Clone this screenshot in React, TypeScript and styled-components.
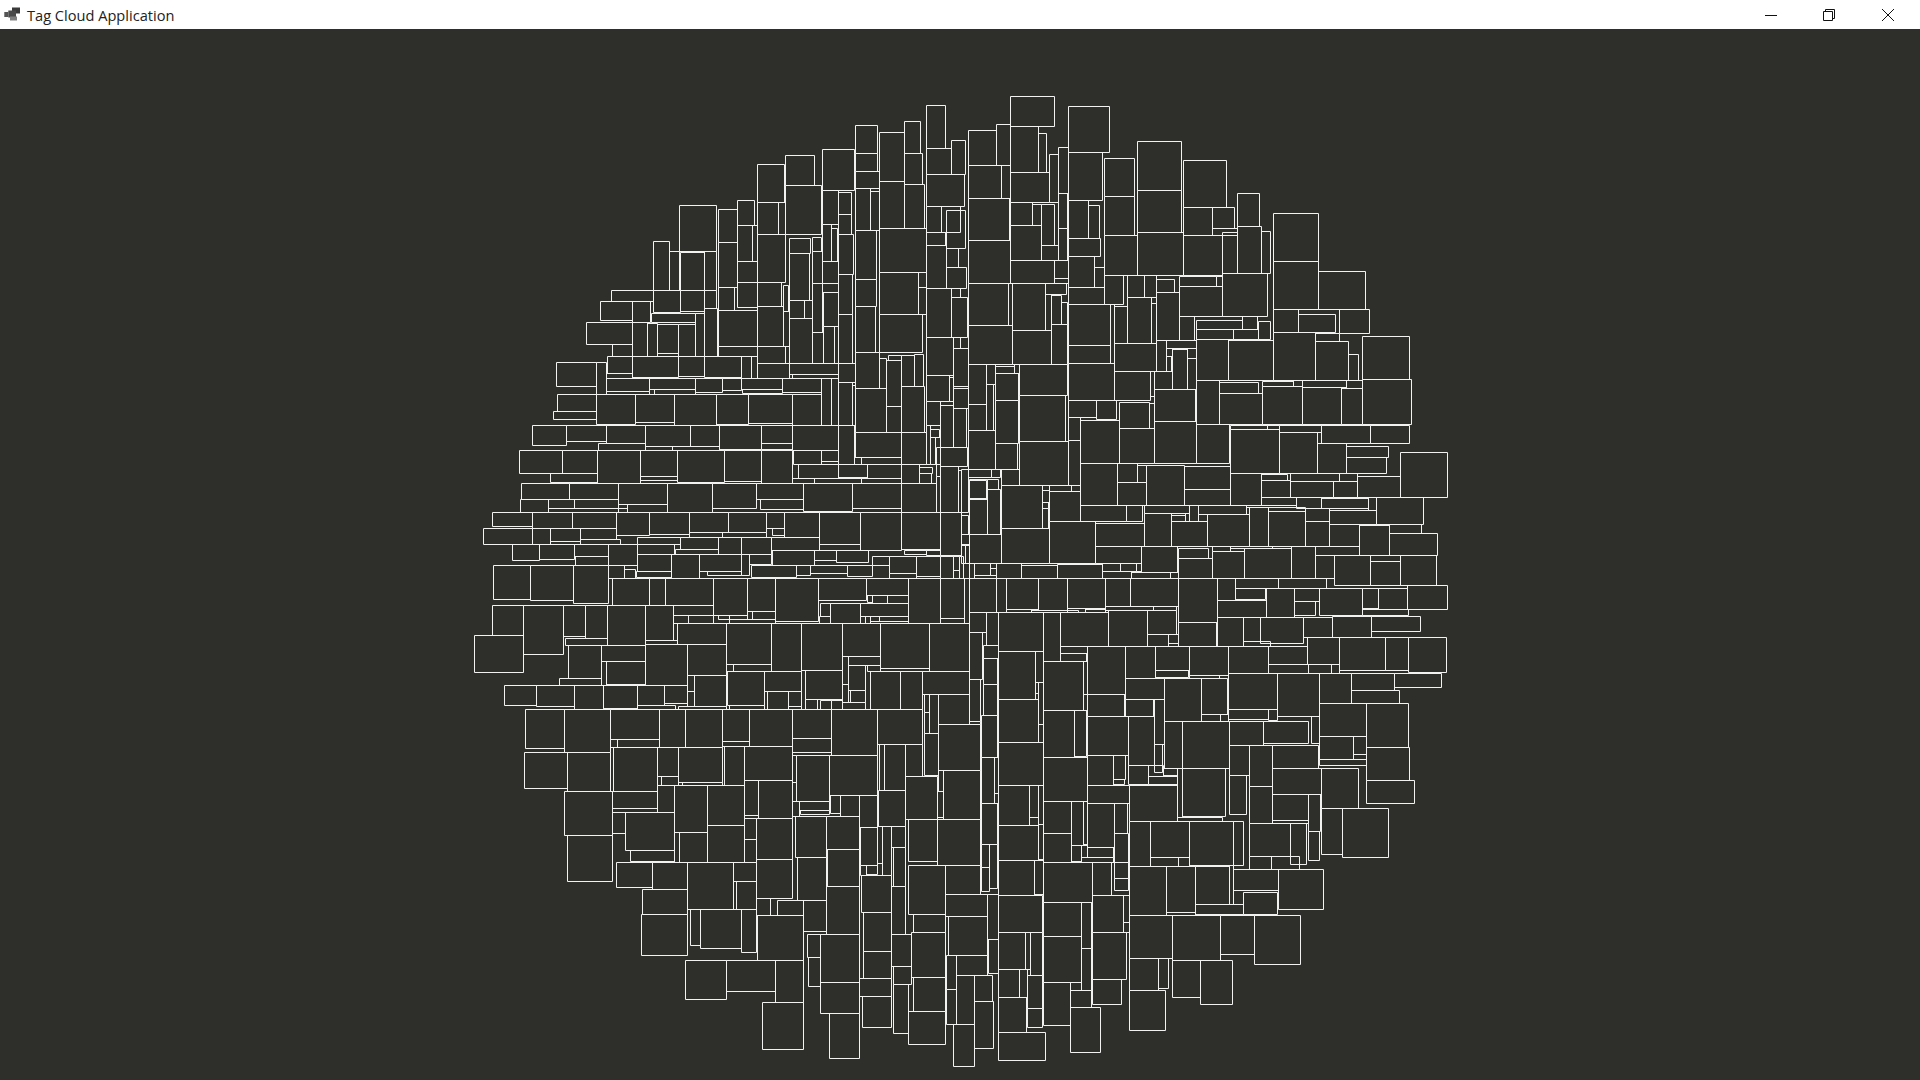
import React from "react";
import styled, { createGlobalStyle } from "styled-components";

type R = [number, number, number, number];

const TL: R[] = [[1399,76,1457,205],[1186,136,1253,220],[1333,124,1382,220],[1258,157,1333,304],[1399,205,1475,284],[1475,181,1517,284],[1186,220,1253,274],[1333,220,1388,313],[1087,208,1184,331],[976,226,1064,316],[892,253,973,367],[1186,274,1258,325],[1399,284,1514,380],[1259,304,1333,445],[1333,313,1394,445],[976,316,1085,463],[1186,325,1232,451],[1232,334,1258,451],[1135,337,1175,403],[1087,331,1135,433],[658,376,770,514],[775,388,832,487],[832,361,884,436],[892,367,955,463],[955,367,976,463],[1399,380,1445,457],[1445,380,1500,457],[1459,391,1517,505],[1135,403,1175,463],[832,436,878,544],[878,436,892,544],[1087,433,1114,544],[1114,445,1132,544],[1259,445,1399,577],[1186,451,1250,597],[892,463,976,607],[1135,463,1180,583],[1399,457,1457,496],[988,475,1052,520],[1057,472,1084,515],[775,487,832,622],[580,484,629,631],[1399,496,1459,626],[629,514,658,631],[661,517,733,631],[733,514,770,631],[1459,505,1495,562],[988,520,1049,661],[1057,515,1087,610],[1087,544,1135,610],[832,544,892,607],[1459,562,1520,625],[1135,583,1177,703],[1259,577,1375,703],[1375,577,1399,622],[1186,597,1250,679],[1087,610,1135,637],[832,607,892,682],[892,607,964,679],[971,616,985,694],[1057,610,1087,757],[775,622,823,691],[454,631,580,664],[580,631,661,697],[661,631,733,694],[733,631,770,685],[1399,626,1475,772],[1475,626,1500,652],[1375,622,1399,703],[1090,637,1135,739],[1475,652,1522,772],[421,664,517,721],[517,664,572,727],[988,661,1033,715],[1033,661,1057,715],[1186,679,1247,817],[892,679,970,799],[775,691,892,799],[574,700,706,727],[733,685,773,829],[706,700,733,829],[970,694,988,799],[1259,703,1388,817],[1135,703,1177,850],[988,715,1057,850],[379,727,517,793],[517,727,562,829],[562,730,592,829],[592,733,655,820],[655,733,706,829],[1090,739,1123,850],[1123,739,1135,850],[1057,757,1090,850],[1399,772,1480,886],[1480,772,1500,805],[1480,805,1524,920],[458,793,517,829],[775,799,892,829],[892,799,976,850],[976,799,988,850],[1186,817,1259,925],[1259,835,1280,925],[1285,826,1325,841],[1280,841,1325,979],[1325,826,1363,919],[1363,823,1391,919],[442,829,517,880],[517,829,655,892],[655,829,733,889],[733,829,844,892],[844,829,874,895],[874,829,892,895],[289,847,409,919],[409,847,439,943],[892,850,988,895],[988,850,1135,883],[1135,850,1186,907],[439,880,517,895],[997,883,1135,895],[1399,886,1468,964],[1468,892,1480,964],[439,895,568,934],[568,895,706,928],[706,895,787,937],[787,895,844,931],[844,895,967,928],[967,895,1084,937],[1084,895,1114,1036],[1114,895,1135,1036],[1135,907,1177,1036],[1177,916,1186,1036],[1186,925,1279,1057],[1325,919,1393,1057],[1480,925,1525,985],[439,934,568,943],[584,928,706,943],[847,928,967,940],[292,943,409,994],[409,943,526,1033],[526,943,643,1027],[643,943,769,1036],[769,943,865,1033],[865,943,997,1030],[997,943,1084,1036],[1279,979,1325,1057],[1399,964,1441,1036],[1441,976,1480,1102],[1480,985,1520,1102],[280,994,409,1018],[217,1036,319,1096],[319,1036,439,1084],[439,1036,556,1090],[556,1036,691,1099],[691,1036,778,1099],[778,1036,904,1108],[904,1036,997,1090],[997,1036,1135,1111],[1135,1036,1184,1153],[1186,1057,1324,1132],[1324,1057,1399,1153],[1399,1036,1411,1153],[1411,1048,1438,1072],[1411,1072,1426,1153],[1426,1072,1441,1153],[415,1090,556,1111],[904,1090,997,1108],[556,1099,637,1111],[637,1099,778,1111],[178,1111,307,1180],[307,1111,412,1180],[412,1111,541,1209],[541,1111,652,1189],[652,1111,793,1206],[793,1111,904,1204],[904,1111,997,1209],[1000,1111,1084,1153],[1084,1111,1135,1144],[1441,1102,1522,1160],[1429,1102,1441,1188],[1429,1190,1441,1297],[1184,1132,1204,1153],[1204,1132,1324,1153],[1015,1153,1135,1195],[1135,1153,1222,1192],[1222,1153,1324,1195],[1324,1153,1378,1210],[1378,1162,1417,1180],[1378,1180,1414,1210],[1441,1160,1495,1297],[1495,1170,1503,1297],[271,1180,412,1207],[541,1189,652,1200],[997,1195,1063,1210],[1063,1195,1204,1210],[1204,1195,1324,1210],[184,1210,328,1258],[328,1210,475,1258],[475,1210,622,1273],[622,1210,757,1297],[757,1210,889,1285],[889,1210,1030,1258],[1030,1210,1177,1294],[1177,1210,1324,1285],[1324,1210,1429,1297],[181,1258,265,1297],[265,1258,343,1285],[343,1258,475,1285],[901,1258,1030,1288],[475,1273,502,1297],[502,1273,622,1297],[265,1285,502,1297],[97,1297,217,1339],[217,1297,337,1345],[337,1297,469,1345],[469,1297,568,1366],[568,1297,688,1363],[688,1297,805,1357],[805,1297,919,1357],[919,1297,973,1345],[973,1297,1078,1372],[1078,1297,1201,1393],[1201,1297,1324,1411],[1324,1297,1441,1408],[1441,1297,1503,1425],[1505,1305,1525,1363],[1334,1410,1400,1422],[1400,1410,1440,1425],[70,1345,217,1393],[217,1345,271,1393],[271,1345,361,1384],[361,1345,469,1378],[937,1345,973,1366],[688,1357,787,1372],[787,1357,919,1372],[361,1378,481,1393],[532,1372,661,1393],[661,1372,775,1408],[775,1372,844,1423],[844,1372,934,1423],[934,1372,1078,1411],[1078,1393,1201,1411],[157,1393,238,1441],[238,1393,343,1438],[343,1393,445,1429],[445,1393,532,1456],[532,1393,643,1423],[646,1408,775,1423],[937,1411,1063,1456],[1063,1411,1129,1441],[1129,1411,1225,1447],[532,1423,634,1474],[634,1423,718,1495],[718,1423,844,1474],[844,1423,868,1486],[868,1423,934,1453],[346,1429,445,1456],[1238,1429,1288,1456],[1288,1429,1369,1480],[1288,1480,1369,1495],[1369,1429,1441,1489],[1441,1429,1480,1495],[1480,1430,1498,1470],[1480,1470,1498,1495],[1498,1430,1510,1495],[1510,1450,1527,1495],[100,1456,211,1558],[211,1456,340,1561],[340,1456,445,1570],[445,1456,493,1495],[1051,1456,1162,1480],[1162,1456,1238,1489],[874,1456,1009,1492],[1009,1456,1051,1486],[493,1468,526,1495],[529,1474,634,1492],[742,1474,844,1486]];

const TR: R[] = [[151,49,284,139],[325,79,449,217],[25,151,109,256],[109,133,151,256],[151,139,236,277],[236,160,260,277],[532,184,665,331],[670,241,799,382],[268,223,295,367],[295,202,325,340],[325,217,427,361],[433,235,523,349],[25,256,124,355],[124,256,151,355],[151,277,268,367],[532,331,664,457],[433,349,523,466],[832,340,898,439],[670,382,757,466],[757,382,823,445],[940,400,1075,544],[25,355,148,481],[151,367,217,436],[217,373,244,436],[244,373,283,496],[295,340,322,445],[325,361,385,475],[385,376,418,475],[757,445,832,466],[832,439,904,580],[904,454,931,580],[787,457,832,580],[433,466,532,586],[532,457,670,586],[670,466,787,586],[151,436,244,541],[295,445,322,541],[325,475,421,529],[25,481,151,610],[244,496,295,541],[151,541,283,610],[283,541,325,595],[325,529,403,622],[403,562,433,622],[940,544,1075,688],[1075,574,1216,688],[283,595,325,610],[433,586,490,673],[502,586,553,652],[553,586,589,652],[589,598,643,637],[658,589,769,619],[769,589,787,619],[787,580,922,709],[25,610,145,736],[145,610,157,736],[157,610,256,751],[256,610,319,643],[325,622,433,673],[589,637,658,781],[658,619,787,709],[256,643,274,751],[274,646,304,733],[304,667,322,733],[502,652,574,790],[574,670,589,790],[463,679,502,790],[325,673,451,796],[451,673,463,850],[940,688,1015,757],[1015,703,1126,757],[1138,688,1228,760],[658,709,703,781],[709,721,847,748],[847,709,892,748],[895,724,931,778],[709,748,820,778],[820,748,895,778],[25,736,157,853],[157,751,274,853],[274,733,322,853],[1066,760,1138,784],[1207,769,1348,898],[940,757,1066,901],[1066,784,1165,901],[1165,823,1195,901],[463,790,589,874],[589,781,619,874],[619,781,709,805],[709,778,805,901],[805,781,940,901],[325,796,451,850],[619,805,637,829],[637,808,682,928],[682,805,709,835],[682,835,709,928],[619,829,634,874],[25,853,79,973],[79,853,106,913],[106,859,163,880],[163,853,178,880],[106,880,175,961],[178,853,322,946],[325,850,463,961],[463,874,571,961],[571,874,583,949],[583,874,637,928],[709,901,778,1033],[778,907,895,940],[907,904,1000,919],[1000,901,1027,919],[1027,901,1159,922],[1159,901,1207,925],[1207,898,1354,1033],[583,928,706,1024],[778,940,907,1033],[907,919,1027,1033],[1027,922,1144,1033],[1144,925,1207,1033],[79,913,100,1051],[25,973,79,1051],[106,961,175,1090],[178,946,316,1084],[325,961,409,1012],[409,961,469,1018],[478,967,568,1045],[568,970,583,1045],[361,1021,478,1150],[325,1012,361,1081],[583,1024,709,1150],[709,1033,808,1150],[812,1036,922,1048],[922,1036,958,1048],[958,1036,1084,1057],[1084,1036,1231,1090],[1231,1036,1348,1090],[812,1048,958,1180],[958,1057,1072,1180],[1072,1057,1084,1090],[478,1045,583,1150],[25,1051,106,1168],[106,1090,172,1168],[178,1084,325,1216],[325,1081,361,1216],[1072,1090,1159,1180],[1159,1099,1285,1132],[1159,1132,1279,1180],[1321,1117,1462,1252],[361,1150,472,1276],[472,1150,532,1207],[532,1156,559,1207],[559,1156,673,1276],[673,1159,811,1228],[811,1180,904,1276],[904,1183,982,1201],[991,1180,1138,1204],[1138,1180,1192,1204],[1192,1189,1321,1252],[4,1168,25,1297],[25,1168,94,1192],[94,1168,121,1192],[28,1201,79,1255],[27,1199,81,1257],[82,1198,115,1228],[28,1255,82,1363],[82,1228,121,1363],[124,1168,178,1216],[124,1216,247,1345],[247,1216,268,1231],[268,1216,334,1234],[334,1216,361,1234],[904,1201,991,1252],[991,1204,1120,1252],[1120,1204,1192,1252],[472,1207,559,1276],[268,1234,361,1324],[247,1231,268,1267],[247,1267,265,1285],[247,1285,265,1345],[673,1228,811,1276],[904,1252,1009,1276],[1009,1252,1084,1285],[1084,1255,1225,1285],[1225,1252,1249,1291],[1249,1252,1390,1333],[361,1276,499,1324],[499,1276,547,1324],[553,1276,688,1300],[688,1276,715,1324],[715,1276,859,1303],[859,1276,1009,1282],[868,1282,925,1399],[925,1294,1036,1399],[925,1282,1036,1294],[1036,1285,1108,1324],[1108,1291,1249,1333],[553,1300,634,1399],[634,1306,676,1324],[676,1300,688,1324],[634,1324,742,1399],[715,1303,742,1324],[742,1303,868,1399],[1036,1324,1108,1399],[1108,1333,1198,1399],[1198,1336,1288,1426],[1288,1333,1384,1360],[1288,1360,1432,1426],[268,1324,406,1450],[406,1330,553,1399],[124,1345,268,1450],[28,1363,124,1450],[4,1363,28,1393],[406,1399,544,1450],[544,1399,652,1477],[655,1405,745,1435],[757,1399,811,1414],[811,1399,937,1405],[757,1414,853,1495],[853,1405,994,1495],[994,1399,1066,1495],[1066,1399,1198,1426],[1066,1426,1123,1495],[1123,1426,1231,1515],[1231,1426,1321,1444],[1231,1444,1321,1515],[1321,1426,1429,1515],[655,1435,757,1495],[43,1450,91,1486],[109,1450,184,1495],[184,1456,292,1495],[292,1453,427,1495],[427,1450,481,1474],[481,1450,529,1474],[529,1450,544,1474],[427,1474,514,1495],[514,1477,631,1495],[631,1477,655,1495],[91,1450,109,1465],[91,1465,109,1486],[28,1450,43,1495],[4,1395,16,1450],[17,1395,28,1450]];

const BL: R[] = [[457,25,568,105],[568,25,616,105],[616,25,760,105],[760,25,862,135],[862,25,946,123],[946,25,1075,154],[1075,25,1219,90],[1219,25,1345,75],[1345,25,1441,159],[1441,25,1513,145],[1513,25,1528,160],[1222,75,1237,96],[1237,75,1282,99],[1282,75,1345,99],[1081,101,1111,138],[1111,99,1201,159],[1201,99,1345,138],[1078,140,1111,159],[97,106,190,196],[190,106,310,253],[310,106,376,199],[376,106,442,205],[442,106,556,226],[556,106,640,211],[640,106,760,136],[640,136,685,159],[685,136,760,159],[760,135,808,159],[775,135,862,148],[862,123,877,148],[877,123,946,148],[808,148,946,159],[1201,140,1216,159],[1216,140,1231,159],[1231,154,1345,159],[1258,140,1345,154],[316,205,442,226],[556,211,652,223],[43,196,190,307],[652,160,799,223],[799,160,934,283],[934,160,1024,303],[1024,160,1147,300],[1147,160,1261,259],[1261,160,1408,295],[1408,160,1528,303],[325,226,424,325],[424,226,556,274],[556,223,682,346],[682,223,799,316],[424,274,439,346],[439,274,556,343],[1147,259,1165,343],[1165,259,1261,286],[1165,286,1216,361],[1222,286,1261,304],[799,283,820,304],[820,283,934,304],[1231,304,1321,418],[1321,304,1387,418],[1387,304,1528,373],[802,304,913,406],[913,304,1024,364],[1036,301,1147,388],[298,325,424,346],[682,316,703,364],[703,316,799,409],[133,346,229,406],[229,346,343,409],[343,346,430,418],[430,346,532,415],[532,346,613,406],[613,346,682,400],[682,364,703,409],[922,364,985,418],[985,364,1024,409],[1147,343,1165,397],[1171,361,1216,397],[1036,388,1072,418],[1081,391,1114,418],[1114,391,1147,418],[532,406,646,418],[655,409,799,418],[808,406,913,418],[985,409,1024,418],[1147,397,1216,418],[1393,373,1408,427],[1408,373,1435,490],[1435,373,1528,463],[196,418,313,535],[313,418,451,547],[451,418,598,508],[598,418,676,532],[676,418,787,532],[787,418,868,514],[868,418,997,529],[997,418,1114,505],[1114,418,1252,556],[1252,418,1387,523],[1393,427,1408,490],[1435,463,1561,601],[1393,490,1435,616],[451,508,472,532],[472,508,598,532],[997,505,1114,547],[787,514,868,529],[193,547,322,655],[322,547,451,664],[460,532,592,664],[592,532,655,619],[655,532,787,637],[793,529,853,646],[853,529,997,631],[997,556,1009,637],[1009,556,1108,694],[1108,556,1252,676],[1258,523,1273,661],[1273,523,1336,661],[1336,523,1387,619],[592,619,604,646],[604,619,655,646],[667,637,787,646],[1336,619,1432,748],[1435,601,1450,664],[1450,601,1561,748],[853,631,895,736],[895,631,997,745],[592,646,643,727],[643,646,742,787],[742,646,853,766],[997,637,1009,694],[1255,661,1336,769],[313,664,457,796],[457,664,592,715],[1111,676,1141,730],[1141,676,1198,739],[1198,676,1252,772],[1432,664,1450,742],[1018,694,1108,721],[997,694,1018,739],[1020,721,1108,733],[457,715,592,727],[457,727,496,790],[496,727,643,841],[853,745,889,808],[889,745,997,868],[1006,739,1099,862],[1099,739,1198,838],[1345,748,1432,874],[1432,748,1561,886],[742,766,853,877],[1201,772,1252,886],[1252,769,1267,880],[1267,769,1294,916],[1294,769,1336,832],[643,787,658,877],[658,787,742,877],[322,796,457,934],[853,808,889,877],[1300,832,1336,949],[511,841,643,874],[1102,838,1198,949],[889,868,997,985],[1012,862,1099,991],[469,877,577,952],[577,877,682,958],[682,877,820,1018],[820,877,889,934],[1345,886,1456,1033],[1456,886,1561,973],[1201,886,1219,916],[1219,886,1252,913],[1204,916,1294,1027],[829,934,889,1018],[547,958,682,1033],[1294,949,1336,1093],[1099,949,1198,1093],[1456,973,1582,1039],[889,985,931,1036],[952,991,1030,1036],[1030,991,1099,1084],[691,1018,721,1126],[721,1018,844,1135],[844,1018,889,1147],[1210,1027,1294,1144],[544,1033,682,1156],[892,1036,1030,1171],[1360,1033,1456,1087],[1465,1039,1582,1156],[1042,1093,1081,1162],[1081,1093,1198,1237],[1294,1093,1354,1189],[1354,1087,1456,1222],[1210,1144,1294,1225],[676,1171,799,1288],[799,1171,946,1264],[946,1171,1030,1297],[1045,1162,1081,1249],[1459,1156,1489,1258],[1489,1156,1582,1216],[1300,1189,1354,1243],[1360,1222,1456,1324],[1198,1225,1294,1279],[1081,1237,1198,1330],[1300,1243,1345,1390],[1207,1279,1294,1372],[907,1297,1030,1438],[1108,1330,1198,1465],[1345,1324,1456,1423],[1459,1258,1489,1363],[1489,1216,1543,1363],[1480,1363,1543,1489]];

const BR: R[] = [[28,25,109,126],[109,25,139,126],[139,25,235,117],[235,25,322,120],[322,25,436,114],[436,25,511,108],[511,25,655,108],[655,25,772,156],[772,25,826,90],[826,25,955,54],[955,25,1099,54],[826,54,916,87],[919,54,1003,141],[1003,54,1078,93],[1078,54,1207,135],[1207,54,1255,114],[1255,54,1342,117],[1342,45,1462,118],[1003,93,1066,135],[772,90,919,141],[436,108,580,120],[580,108,648,120],[139,117,214,126],[214,120,355,126],[322,114,376,126],[376,117,436,126],[1207,117,1345,135],[28,126,79,186],[79,126,115,225],[115,126,250,243],[250,126,301,274],[301,126,445,229],[445,120,562,229],[562,120,649,192],[655,156,769,229],[772,141,850,229],[850,141,901,214],[901,141,1030,220],[1030,141,1117,202],[1117,138,1234,202],[1234,138,1381,184],[562,192,625,229],[625,192,655,220],[625,220,655,229],[850,214,931,229],[28,186,67,328],[1042,202,1138,283],[1138,202,1276,301],[1276,202,1345,301],[1345,202,1459,307],[71,226,115,265],[301,229,382,250],[301,250,379,274],[382,229,496,373],[496,229,586,325],[586,229,688,301],[688,229,805,316],[805,229,925,310],[925,229,1042,283],[115,243,226,388],[226,243,250,337],[71,265,112,343],[250,274,370,421],[370,274,382,373],[925,283,1045,310],[1045,283,1114,310],[586,301,685,322],[1114,283,1138,310],[805,310,952,418],[952,310,1078,439],[1078,310,1174,400],[1174,310,1303,361],[1303,310,1444,352],[688,316,778,325],[496,325,613,388],[613,325,724,454],[724,325,802,433],[28,328,61,454],[71,343,112,436],[1174,361,1318,400],[382,373,493,439],[370,373,382,421],[115,388,235,517],[226,337,235,370],[235,337,250,463],[496,388,580,439],[583,388,613,523],[1078,400,1219,499],[1219,400,1345,532],[805,418,925,448],[925,418,952,451],[250,421,343,562],[343,421,379,559],[382,439,505,556],[505,439,583,586],[724,433,781,454],[781,433,805,454],[65,436,112,562],[28,454,61,463],[1054,439,1078,520],[613,454,667,595],[667,454,808,595],[808,454,910,526],[910,454,1045,520],[235,463,250,517],[1078,499,1180,568],[1180,499,1219,553],[115,517,250,646],[808,526,868,616],[868,526,937,649],[937,526,1075,595],[1219,532,1348,631],[583,523,607,607],[1180,553,1219,568],[250,562,382,694],[382,556,460,646],[460,556,496,628],[65,562,103,700],[103,562,115,670],[1078,568,1219,586],[505,586,565,643],[565,586,610,619],[610,595,652,616],[565,619,652,643],[667,595,796,739],[1084,595,1195,715],[937,595,1084,673],[808,616,859,733],[1219,631,1363,700],[460,628,493,643],[115,646,208,766],[208,646,235,742],[235,646,250,763],[382,646,508,700],[508,646,652,754],[652,595,667,742],[868,649,937,760],[937,673,1045,751],[1045,673,1081,784],[250,694,334,790],[334,694,370,826],[370,694,382,823],[382,700,463,832],[463,700,502,790],[65,700,112,823],[103,670,115,700],[1084,715,1147,853],[1147,715,1285,862],[652,742,787,754],[208,742,235,766],[508,754,571,889],[571,754,688,862],[688,754,820,886],[820,754,850,886],[868,760,991,859],[991,760,1039,883],[937,751,1045,760],[115,766,235,871],[235,763,250,868],[250,790,334,877],[463,790,505,925],[1045,784,1078,871],[65,823,88,892],[88,823,112,955],[334,826,364,874],[364,826,382,862],[382,832,460,862],[364,862,460,877],[571,862,655,889],[655,862,688,889],[868,859,934,898],[934,859,1018,898],[115,871,223,976],[223,871,250,973],[250,877,397,997],[397,877,454,976],[454,877,508,976],[65,892,88,964],[508,889,619,1036],[619,889,706,1027],[706,889,808,1003],[808,886,820,1003],[820,898,955,961],[955,898,1090,1018],[463,925,505,961],[850,967,952,1033],[706,1003,850,1033],[115,976,247,1087],[397,976,490,1087],[490,976,508,1057],[82,973,115,1108],[250,997,364,1099],[364,997,394,1135],[619,1027,706,1036],[508,1036,637,1165],[637,1036,781,1171],[781,1036,883,1153],[883,1036,1022,1183],[115,1087,196,1198],[196,1087,211,1198],[211,1087,247,1216],[397,1087,499,1228],[490,1057,508,1087],[85,1108,115,1210],[250,1099,364,1237],[364,1135,394,1261],[508,1165,595,1261],[595,1165,625,1255],[637,1171,721,1282],[721,1171,817,1303],[115,1198,178,1282],[178,1198,202,1282],[202,1216,247,1315],[43,1216,97,1294],[397,1228,484,1303],[250,1237,331,1366],[331,1237,364,1261],[331,1261,394,1312],[508,1261,616,1381],[43,1294,100,1435],[115,1282,199,1387],[202,1315,247,1372],[331,1312,421,1447],[115,1387,256,1471]];

const toPath = (list: R[], ox: number, oy: number) =>
  list
    .map(([a, b, c, d]) => {
      const x0 = Math.floor(ox + a / 3) + 0.5;
      const y0 = Math.floor(oy + b / 3) + 0.5;
      const x1 = Math.floor(ox + c / 3) + 0.5;
      const y1 = Math.floor(oy + d / 3) + 0.5;
      return `M${x0} ${y0}H${x1}V${y1}H${x0}Z`;
    })
    .join("");

const cloudPath =
  toPath(TL, 460, 80) + toPath(TR, 960, 80) + toPath(BL, 460, 570) + toPath(BR, 960, 570);

const GlobalStyle = createGlobalStyle`
  html, body { margin: 0; padding: 0; height: 100%; overflow: hidden; background: #2e2e2b; }
  #root { height: 100%; }
`;

const Window = styled.div`
  display: flex;
  flex-direction: column;
  width: 1920px;
  height: 1080px;
`;

const TitleBar = styled.header`
  flex: 0 0 29px;
  display: flex;
  align-items: center;
  background: #ffffff;
  color: #222222;
  font-family: "Open Sans", "Noto Sans", sans-serif;
  font-size: 14.6px;
  padding: 0 3px 0 4px;
`;

const AppIcon = styled.svg`
  width: 16px;
  height: 16px;
  margin-right: 7px;
  flex: none;
`;

const Title = styled.span`
  flex: 1;
  white-space: nowrap;
`;

const WindowButton = styled.button`
  width: 58.5px;
  height: 29px;
  padding: 0;
  border: 0;
  background: transparent;
  display: flex;
  align-items: center;
  justify-content: center;
`;

const GlyphSvg = styled.svg`
  width: 14px;
  height: 14px;
  fill: none;
  stroke: #111111;
  stroke-width: 1;
`;

const Canvas = styled.main`
  flex: 1;
  background: #2e2e2b;
  overflow: hidden;
`;

const CloudSvg = styled.svg`
  display: block;
  width: 1920px;
  height: 1051px;
`;

const CloudPath = styled.path`
  fill: none;
  stroke: #f2f2f0;
  stroke-width: 1;
`;

export default function App() {
  return (
    <Window>
      <GlobalStyle />
      <TitleBar>
        <AppIcon viewBox="0 0 16 16">
          <rect x="0.3" y="5" width="4" height="5" fill="#555555" />
          <rect x="8" y="0.5" width="8" height="6" fill="#3a3a3a" />
          <rect x="4.3" y="3.5" width="7.7" height="7" fill="#4a4a4a" />
          <rect x="6" y="9.5" width="7" height="4" fill="#808080" />
        </AppIcon>
        <Title>Tag Cloud Application</Title>
        <WindowButton aria-label="Minimize">
          <GlyphSvg viewBox="0 0 14 14"><path d="M1 7.5H13" /></GlyphSvg>
        </WindowButton>
        <WindowButton aria-label="Restore">
          <GlyphSvg viewBox="0 0 14 14"><path d="M1.5 3.5H10.5V12.5H1.5ZM3.5 3.5V1.5H12.5V10.5H10.5" /></GlyphSvg>
        </WindowButton>
        <WindowButton aria-label="Close">
          <GlyphSvg viewBox="0 0 14 14"><path d="M1 1L13 13M13 1L1 13" /></GlyphSvg>
        </WindowButton>
      </TitleBar>
      <Canvas>
        <CloudSvg viewBox="0 29 1920 1051">
          <CloudPath d={cloudPath} />
        </CloudSvg>
      </Canvas>
    </Window>
  );
}
